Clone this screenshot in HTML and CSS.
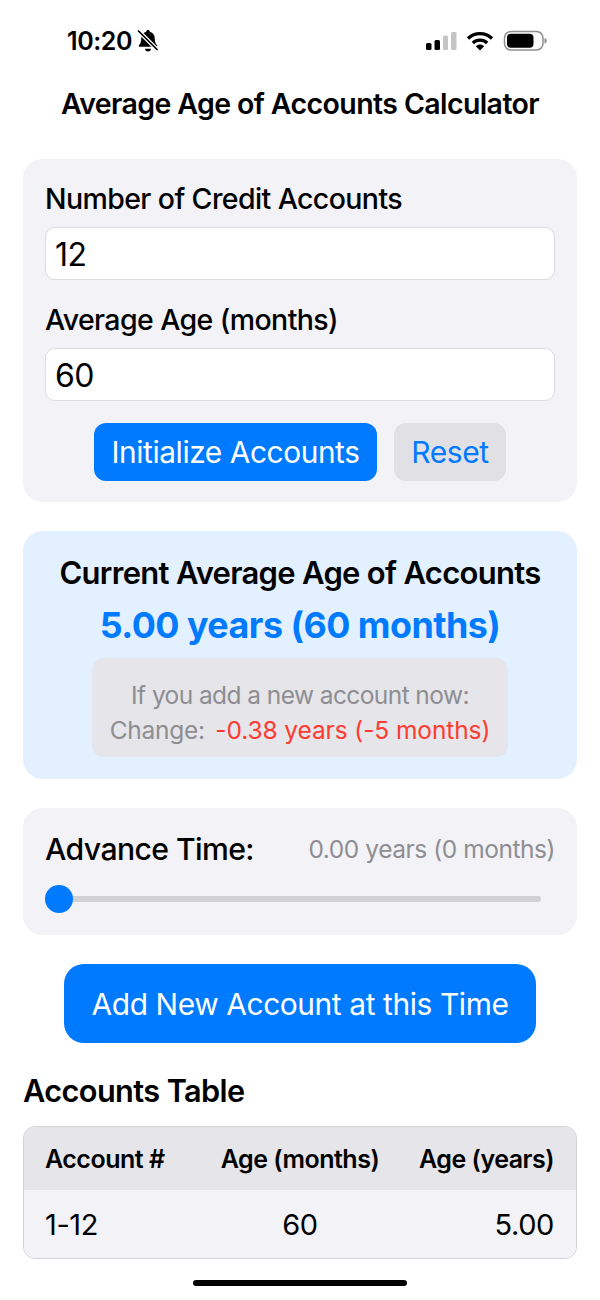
FILE: index.html
```html
<!DOCTYPE html>
<html lang="en">
<head>
    <meta charset="UTF-8">
    <meta name="viewport" content="width=device-width, initial-scale=1.0">
    <title>Average Age of Accounts Calculator</title>
    <link rel="stylesheet" href="styles.css">
</head>
<body>
    <div class="status-bar">
        <div class="status-left">
            <span class="clock">10:20</span>
            <svg class="bell" width="22" height="24" viewBox="0 0 22 24">
                <path d="M11 1c1 0 1.700.7 1.800 1.700 3.400.9 5 3.600 5 7 0 3 .6 4.800 2.300 6.600.5.600.1 1.400-.7 1.400H2.600c-.8 0-1.200-.8-.7-1.400 1.700-1.800 2.300-3.600 2.300-6.600 0-3.400 1.600-6.100 5-7C9.300 1.700 10 1 11 1z" fill="#000"/>
                <path d="M8 19.700h6c-.2 1.700-1.400 2.800-3 2.800s-2.800-1.100-3-2.800z" fill="#000"/>
                <path d="M1.500 2 20 20.500" stroke="#fff" stroke-width="4"/>
                <path d="M1.500 2 20 20.500" stroke="#000" stroke-width="1.700" stroke-linecap="round"/>
            </svg>
        </div>
        <div class="status-right">
            <svg width="32" height="20" viewBox="0 0 32 20">
                <rect x="1" y="12" width="5.500" height="7" rx="1.500" fill="#000"/>
                <rect x="9.500" y="9" width="5.500" height="10" rx="1.500" fill="#000"/>
                <rect x="18" y="4.500" width="5" height="14.500" rx="1.500" fill="#c4c4c6"/>
                <rect x="26" y="1" width="5.500" height="18" rx="1.500" fill="#c4c4c6"/>
            </svg>
            <svg class="wifi" width="28" height="20" viewBox="0 0 28 20">
                <path d="M2 7.500C8.800 1 19.200 1 26 7.500" fill="none" stroke="#000" stroke-width="3.400"/>
                <path d="M6.800 12c4.200-3.800 10.200-3.800 14.400 0" fill="none" stroke="#000" stroke-width="3.400"/>
                <path d="M9.800 15.200c2.600-2.200 5.800-2.200 8.400 0L14 19.500z" fill="#000"/>
            </svg>
            <svg class="battery" width="44" height="22" viewBox="0 0 44 22">
                <rect x="1.500" y="1.500" width="38.500" height="18.500" rx="6.500" fill="none" stroke="#8e8e90" stroke-width="1.500"/>
                <rect x="4" y="3.700" width="26.500" height="14" rx="4" fill="#000"/>
                <path d="M41.500 8c1.500.4 2.300 1.400 2.300 2.800s-.8 2.400-2.300 2.800z" fill="#8e8e90"/>
            </svg>
        </div>
    </div>

    <h1 class="page-title">Average Age of Accounts Calculator</h1>

    <div class="container">
        <div class="card setup">
            <label class="field-label">Number of Credit Accounts</label>
            <div class="input">12</div>
            <label class="field-label second">Average Age (months)</label>
            <div class="input">60</div>
            <div class="setup-buttons">
                <button class="btn-primary">Initialize Accounts</button>
                <button class="btn-reset">Reset</button>
            </div>
        </div>

        <div class="card summary">
            <h2>Current Average Age of Accounts</h2>
            <p class="summary-value">5.00 years (60 months)</p>
            <div class="impact">
                <p class="impact-line">If you add a new account now:</p>
                <p>Change: <span class="negative">-0.38 years (-5 months)</span></p>
            </div>
        </div>

        <div class="card slider-card">
            <div class="slider-head">
                <span class="slider-label">Advance Time:</span>
                <span class="slider-value">0.00 years (0 months)</span>
            </div>
            <div class="slider">
                <div class="slider-thumb"></div>
            </div>
        </div>

        <button class="btn-add">Add New Account at this Time</button>

        <h3 class="table-title">Accounts Table</h3>
        <table class="accounts">
            <thead>
                <tr>
                    <th class="left">Account #</th>
                    <th>Age (months)</th>
                    <th class="right">Age (years)</th>
                </tr>
            </thead>
            <tbody>
                <tr>
                    <td class="left">1-12</td>
                    <td>60</td>
                    <td class="right">5.00</td>
                </tr>
            </tbody>
        </table>
    </div>

    <div class="home-indicator"></div>
</body>
</html>
```

FILE: styles.css
```css
body {
    font-family: Inter, "Liberation Sans", sans-serif;
    margin: 0;
    padding: 0;
    background-color: #fff;
    color: #000;
}
p, h1, h2, h3 {
    margin: 0;
}
.status-bar {
    height: 82px;
    display: flex;
    justify-content: space-between;
    padding: 0 53px 0 67px;
    box-sizing: border-box;
}
.status-left, .status-right {
    display: flex;
    align-items: center;
    height: 82px;
}
.clock {
    font-size: 25px;
    font-weight: 600;
    letter-spacing: -0.4px;
}
.bell {
    margin-left: 5px;
}
.wifi {
    margin-left: 9px;
}
.battery {
    margin-left: 9px;
}
.page-title {
    font-size: 28.5px;
    line-height: 44px;
    font-weight: 600;
    text-align: center;
    letter-spacing: -0.6px;
    margin-bottom: 33px;
}
.container {
    padding: 0 23px;
}
.card {
    background-color: #f2f2f7;
    border-radius: 20px;
    box-sizing: border-box;
    margin-bottom: 29px;
}
.setup {
    height: 343px;
    padding: 20px 22px 0;
}
.field-label {
    display: block;
    font-size: 28.5px;
    line-height: 40px;
    font-weight: 500;
    letter-spacing: -0.6px;
    margin-bottom: 8px;
}
.field-label.second {
    margin-top: 20px;
}
.input {
    height: 53px;
    box-sizing: border-box;
    background-color: #fff;
    border: 1px solid #dcdce0;
    border-radius: 10px;
    padding: 0 9px;
    font-size: 32px;
    line-height: 53px;
    letter-spacing: -0.5px;
}
.setup-buttons {
    display: flex;
    justify-content: center;
    gap: 17px;
    margin-top: 22px;
}
.btn-primary, .btn-reset, .btn-add {
    font-family: inherit;
    border: none;
    padding: 0;
    letter-spacing: -0.4px;
}
.btn-primary {
    width: 283px;
    height: 58px;
    background-color: #007aff;
    color: #fff;
    border-radius: 12px;
    font-size: 29.8px;
}
.btn-reset {
    width: 112px;
    height: 58px;
    background-color: #e0e0e5;
    color: #007aff;
    border-radius: 12px;
    font-size: 30px;
}
.summary {
    height: 248px;
    background-color: #e3f0ff;
    padding-top: 21px;
    text-align: center;
}
.summary h2 {
    font-size: 31px;
    line-height: 42px;
    font-weight: 600;
    letter-spacing: -0.7px;
}
.summary-value {
    font-size: 35.8px;
    line-height: 52px;
    font-weight: 700;
    color: #007aff;
    letter-spacing: -0.5px;
    margin-top: 5px;
}
.impact {
    width: 416px;
    height: 99px;
    box-sizing: border-box;
    margin: 7px auto 0;
    padding-top: 20px;
    background-color: #e5e5ea;
    border-radius: 12px;
    font-size: 24.5px;
    line-height: 35px;
    color: #8e8e93;
    letter-spacing: -0.3px;
}
.impact-line {
    letter-spacing: -0.58px;
}
.negative {
    color: #ff3b30;
    margin-left: 4px;
    letter-spacing: -0.1px;
}
.slider-card {
    height: 127px;
    padding: 19px 22px 0 22px;
}
.slider-head {
    display: flex;
    justify-content: space-between;
    align-items: center;
    height: 44px;
}
.slider-label {
    font-size: 30.2px;
    font-weight: 500;
    letter-spacing: -0.6px;
}
.slider-value {
    font-size: 24.5px;
    color: #8e8e93;
    letter-spacing: -0.45px;
}
.slider {
    position: relative;
    height: 6px;
    width: 496px;
    margin-top: 25px;
    background-color: #d1d1d6;
    border-radius: 3px;
}
.slider-thumb {
    position: absolute;
    left: 0;
    top: -11px;
    width: 28px;
    height: 28px;
    border-radius: 50%;
    background-color: #007aff;
}
.btn-add {
    display: block;
    width: 472px;
    height: 79px;
    margin: 0 auto;
    background-color: #007aff;
    color: #fff;
    border-radius: 20px;
    font-size: 29.9px;
}
.table-title {
    font-size: 30.7px;
    line-height: 44px;
    font-weight: 600;
    letter-spacing: -0.6px;
    margin-top: 26px;
    margin-bottom: 13px;
}
.accounts {
    width: 100%;
    border-collapse: separate;
    border-spacing: 0;
    border: 1px solid #d1d1d6;
    border-radius: 12px;
    overflow: hidden;
    table-layout: fixed;
}
.accounts th {
    height: 63px;
    padding: 0;
    background-color: #e5e5ea;
    font-size: 25px;
    font-weight: 600;
    letter-spacing: -0.5px;
    text-align: center;
}
.accounts td {
    height: 68px;
    padding: 0;
    background-color: #f2f2f7;
    font-size: 29px;
    letter-spacing: -0.4px;
    text-align: center;
}
.accounts .left {
    text-align: left;
    padding-left: 21px;
}
.accounts .right {
    text-align: right;
    padding-right: 22px;
}
.home-indicator {
    width: 214px;
    height: 6px;
    margin: 21px auto 0;
    background-color: #000;
    border-radius: 3px;
}
```
